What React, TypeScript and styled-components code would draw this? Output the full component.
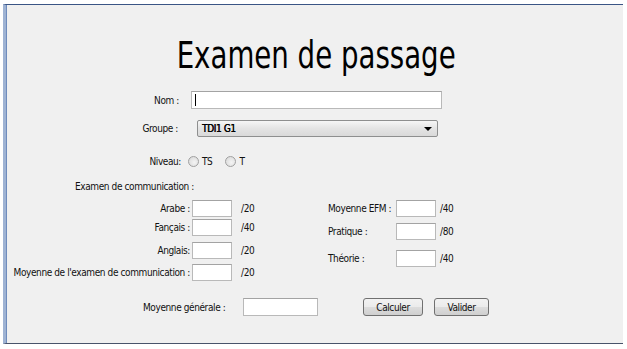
import styled, { createGlobalStyle } from "styled-components";

const GlobalStyle = createGlobalStyle`
    body {
        margin: 0;
        background: #fff;
        font-family: "DejaVu Sans Condensed", "DejaVu Sans", "Liberation Sans", sans-serif;
    }
`;

const App = () => {
    return (
        <Page>
            <GlobalStyle />
            <Frame>
                <Title>Examen de passage</Title>

                <Row $top={17}>
                    <Label $width={173}>Nom :</Label>
                    <TextBox $width={251} $height={18} $left={12}>
                        <Caret />
                    </TextBox>
                </Row>

                <Row $top={11}>
                    <Label $width={172}>Groupe :</Label>
                    <Select>
                        <span>TDI1 G1</span>
                        <Arrow />
                    </Select>
                </Row>

                <Row $top={19}>
                    <Label $width={175}>Niveau:</Label>
                    <RadioGroup>
                        <Radio />
                        <span>TS</span>
                        <Radio $gap />
                        <span>T</span>
                    </RadioGroup>
                </Row>

                <Row $top={14}>
                    <Caption>Examen de communication :</Caption>
                </Row>

                <Columns>
                    <LeftCol>
                        <Field $top={0}>
                            <Label $width={184}>Arabe :</Label>
                            <TextBox $width={40} $height={17} $left={2} />
                            <Unit $left={9}>/20</Unit>
                        </Field>
                        <Field $top={2}>
                            <Label $width={184}>Fançais :</Label>
                            <TextBox $width={40} $height={17} $left={2} />
                            <Unit $left={9}>/40</Unit>
                        </Field>
                        <Field $top={6}>
                            <Label $width={184}>Anglais:</Label>
                            <TextBox $width={40} $height={17} $left={2} />
                            <Unit $left={9}>/20</Unit>
                        </Field>
                        <Field $top={5}>
                            <Label $width={184}>Moyenne de l'examen de communication :</Label>
                            <TextBox $width={40} $height={17} $left={2} />
                            <Unit $left={9}>/20</Unit>
                        </Field>
                    </LeftCol>
                    <RightCol>
                        <Field $top={0}>
                            <SideLabel>Moyenne EFM :</SideLabel>
                            <TextBox $width={40} $height={17} $left={0} />
                            <Unit $left={4}>/40</Unit>
                        </Field>
                        <Field $top={6}>
                            <SideLabel>Pratique :</SideLabel>
                            <TextBox $width={40} $height={17} $left={0} />
                            <Unit $left={4}>/80</Unit>
                        </Field>
                        <Field $top={10}>
                            <SideLabel>Théorie :</SideLabel>
                            <TextBox $width={40} $height={17} $left={0} />
                            <Unit $left={4}>/40</Unit>
                        </Field>
                    </RightCol>
                </Columns>

                <Footer>
                    <Label $width={100} $align="left">Moyenne générale :</Label>
                    <TextBox $width={75} $height={18} $left={0} />
                    <Button $width={60} $left={45}>Calculer</Button>
                    <Button $width={55} $left={11}>Valider</Button>
                </Footer>
            </Frame>
        </Page>
    );
};

export default App;

const Page = styled.div`
    width: 627px;
    height: 349px;
    overflow: hidden;
    padding-top: 4px;
    padding-left: 3px;
    box-sizing: border-box;
`;

const Frame = styled.div`
    width: 620px;
    height: 340px;
    box-sizing: border-box;
    background: #f0f0f0;
    border-top: 1px solid #3a5585;
    border-bottom: 1px solid #48536a;
    border-left: 3px solid #9fb3d3;
    box-shadow: inset 1px 0 0 #6f8cbd;
    display: flex;
    flex-direction: column;
    font-size: 10px;
    letter-spacing: -0.4px;
    color: #111;
`;

const Title = styled.h1`
    margin: 32px 0 0 0;
    font-size: 37px;
    line-height: 37px;
    font-weight: normal;
    letter-spacing: 0;
    text-align: center;
    padding-left: 4px;
    color: #000;
    transform: scaleX(0.83);
`;

const Row = styled.div<{ $top: number }>`
    display: flex;
    align-items: center;
    margin-top: ${(p) => p.$top}px;
`;

const Label = styled.span<{ $width: number; $align?: string }>`
    display: inline-block;
    width: ${(p) => p.$width}px;
    flex: none;
    text-align: ${(p) => p.$align || "right"};
    white-space: nowrap;
`;

const TextBox = styled.div<{ $width: number; $height: number; $left: number }>`
    width: ${(p) => p.$width}px;
    height: ${(p) => p.$height}px;
    margin-left: ${(p) => p.$left}px;
    box-sizing: border-box;
    background: #fff;
    border: 1px solid #b9b9b9;
    border-top-color: #a3a3a3;
    display: flex;
    align-items: center;
    flex: none;
`;

const Caret = styled.span`
    width: 1px;
    height: 12px;
    margin-left: 3px;
    background: #000;
`;

const Select = styled.div`
    margin-left: 19px;
    width: 241px;
    height: 17px;
    box-sizing: border-box;
    border: 1px solid #8e8f8f;
    border-radius: 2px;
    background: linear-gradient(#f6f6f6, #e4e4e4 50%, #d9d9d9);
    display: flex;
    align-items: center;
    justify-content: space-between;
    padding: 0 5px 0 4px;
    color: #000;
    text-shadow: 0.3px 0 0 #000;
`;

const Arrow = styled.span`
    width: 0;
    height: 0;
    border-left: 4px solid transparent;
    border-right: 4px solid transparent;
    border-top: 4px solid #000;
`;

const RadioGroup = styled.div`
    display: flex;
    align-items: center;
    margin-left: 7px;
    gap: 3px;
`;

const Radio = styled.span<{ $gap?: boolean }>`
    width: 11px;
    height: 11px;
    box-sizing: border-box;
    border-radius: 50%;
    border: 1px solid #a0a0a0;
    background: radial-gradient(circle at 60% 60%, #f4f4f4, #d6d6d6);
    margin-left: ${(p) => (p.$gap ? 10 : 0)}px;
`;

const Caption = styled.span`
    padding-left: 69px;
`;

const Columns = styled.div`
    display: flex;
    margin-top: 8px;
`;

const LeftCol = styled.div`
    width: 322px;
    display: flex;
    flex-direction: column;
`;

const RightCol = styled.div`
    display: flex;
    flex-direction: column;
`;

const Field = styled.div<{ $top: number }>`
    display: flex;
    align-items: center;
    margin-top: ${(p) => p.$top}px;
`;

const SideLabel = styled.span`
    width: 68px;
    flex: none;
    white-space: nowrap;
`;

const Unit = styled.span<{ $left: number }>`
    margin-left: ${(p) => p.$left}px;
`;

const Footer = styled.div`
    display: flex;
    align-items: center;
    margin-top: 17px;
    padding-left: 137px;
`;

const Button = styled.div<{ $width: number; $left: number }>`
    width: ${(p) => p.$width}px;
    height: 18px;
    margin-left: ${(p) => p.$left}px;
    box-sizing: border-box;
    border: 1px solid #707070;
    border-radius: 3px;
    background: linear-gradient(#f2f2f2, #ebebeb 50%, #dddddd 50%, #cfcfcf);
    display: flex;
    align-items: center;
    justify-content: center;
    color: #111;
`;
